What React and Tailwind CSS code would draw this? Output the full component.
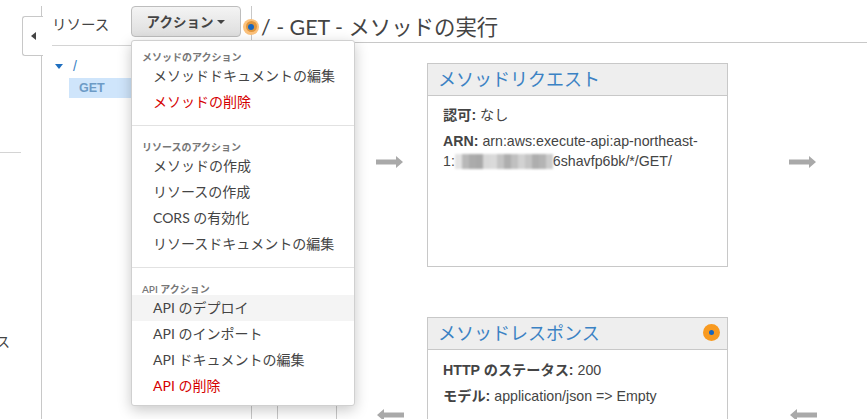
import React from "react";

const cjk = "font-['Liberation_Sans','Noto_Sans_CJK_JP',sans-serif]";
const lato = "font-['Lato','Noto_Sans_CJK_JP',sans-serif]";

const mosaic = ["#e4e4e4", "#b8b8b8", "#ababab", "#a8a8a8", "#d8d8d8", "#dadada", "#c4c4c4", "#aeaeae", "#c0c0c0", "#d2d2d2", "#c4c4c4", "#aeaeae", "#b4b4b4", "#cccccc"];

const menu = [
  {
    label: "メソッドのアクション",
    items: [{ text: "メソッドドキュメントの編集" }, { text: "メソッドの削除", red: true }],
  },
  {
    label: "リソースのアクション",
    items: [{ text: "メソッドの作成" }, { text: "リソースの作成" }, { text: "CORS の有効化" }, { text: "リソースドキュメントの編集" }],
  },
  {
    label: "API アクション",
    items: [{ text: "API のデプロイ", active: true }, { text: "API のインポート" }, { text: "API ドキュメントの編集" }, { text: "API の削除", red: true }],
  },
];

const Dot = () => (
  <span className="flex h-[17px] w-[17px] shrink-0 items-center justify-center rounded-full bg-[#f89a20]">
    <span className="h-[5px] w-[5px] rounded-full bg-[#1666c0]" />
  </span>
);

const HaloDot = () => (
  <span className="flex h-4 w-4 shrink-0 items-center justify-center rounded-full bg-[#fcc27c]">
    <span className="flex h-[11px] w-[11px] items-center justify-center rounded-full bg-[#e0963e]">
      <span className="h-[6px] w-[6px] rounded-full bg-[#1666c0]" />
    </span>
  </span>
);

const Arrow = ({ left }) => (
  <svg width="28" height="12" viewBox="0 0 28 12" className={left ? "rotate-180" : ""}>
    <path d="M0 3.500h20V0l7 6-7 6V8.500H0z" fill="#a9a9a9" />
  </svg>
);

const ActionMenu = () => (
  <div className={`absolute left-[131px] top-[40px] z-10 w-[224px] rounded-[3px] border border-[#d0d0d0] bg-white shadow-[0_4px_14px_rgba(0,0,0,0.22)] ${lato}`}>
    {menu.map((group, i) => (
      <div key={group.label} className={i > 0 ? "border-t border-[#e2e2e2] pt-[14px]" : "pt-[9px]"}>
        <div className="pl-[10px] text-[10px] leading-[14px] font-semibold text-[#777]">{group.label}</div>
        <div className={`-mt-[1px] ${i === 2 ? "pb-[6px]" : "pb-[10px]"}`}>
          {group.items.map((item) => (
            <div
              key={item.text}
              className={`h-[26px] pl-[21px] text-[14px] leading-[26px] ${item.red ? "text-[#d50000]" : "text-[#444]"} ${item.active ? "bg-[#f4f4f4]" : ""}`}
            >
              {item.text}
            </div>
          ))}
        </div>
      </div>
    ))}
  </div>
);

const Card = ({ title, dot, className, children }) => (
  <div className={`w-[301px] border border-[#c8c8c8] bg-white ${className}`}>
    <div className="flex h-[32px] items-start justify-between border-b border-[#c8c8c8] bg-[#eeeeee] pl-[10px] pr-[7px]">
      <span className="text-[18px] leading-[32px] text-[#3b82c4]">{title}</span>
      {dot && <span className="mt-[6px]"><Dot /></span>}
    </div>
    <div className="px-[15px] pt-[10px] text-[14.200px] leading-[20px] text-[#444]">{children}</div>
  </div>
);

export default function App() {
  return (
    <div className={`relative flex h-[419px] w-[867px] overflow-hidden bg-white pt-[6px] ${cjk}`}>
      <div className="relative w-[42px] shrink-0 border-r border-[#c8c8c8]">
        <div className="mt-[146px] w-[21px] border-t border-[#d4d4d4]" />
        <div className="mt-[179px] w-[10px] overflow-hidden text-[14px] leading-[20px] text-[#444]">
          <span className="-ml-[4px] block">ス</span>
        </div>
        <div className="absolute left-[22px] top-[10px] flex h-[40px] w-[21px] items-center justify-center rounded-l-[3px] border border-r-0 border-[#c8c8c8] bg-white">
          <span className="h-0 w-0 border-y-[4px] border-r-[5px] border-y-transparent border-r-[#444]" />
        </div>
      </div>

      <div className="w-[210px] shrink-0 border-r border-[#c8c8c8]">
        <div className="ml-[10px] flex h-[40px] items-center border-b border-[#d4d4d4]">
          <span className="text-[14.500px] text-[#444]">リソース</span>
        </div>
        <div className="ml-[13px] mt-[10px] flex items-center">
          <span className="h-0 w-0 border-x-[4px] border-t-[5px] border-x-transparent border-t-[#1f6fc0]" />
          <span className="ml-[10px] text-[14px] leading-[20px] text-[#3b82c4]">/</span>
        </div>
        <div className="ml-[27px] mt-[2px] flex h-[20px] items-center bg-[#cfe5fb] pl-[10px] text-[12.500px] font-bold text-[#6d9bc6]">GET</div>
      </div>

      <div className="min-w-0 flex-1">
        <div className="flex h-[37px] items-center border-b border-[#c8c8c8] pt-[5px]">
          <span className="-ml-[9px] mr-[2px]"><HaloDot /></span>
          <h1 className={`text-[21.400px] leading-[28px] text-[#444] ${lato}`}>/ - GET - メソッドの実行</h1>
        </div>
        <div className="flex h-[376px]">
          <div className="w-[26px] shrink-0 border-r border-[#c8c8c8]" />
          <div className="w-[59px] shrink-0 border-r border-[#c8c8c8]" />
          <div className="grid min-w-0 flex-1 grid-cols-[90px_301px_1fr] grid-rows-[204px_50px_1fr] pt-[20px]">
            <div className="flex items-start pl-[39px] pt-[93px]"><Arrow /></div>
            <Card title="メソッドリクエスト">
              <p className="-mt-[1px]"><b>認可:</b> なし</p>
              <p className="mt-[6px]"><b>ARN:</b> arn:aws:execute-api:ap-northeast-<br />
                1:<span className="inline-flex h-[15px] w-[98px] blur-[1px] align-[-3px]">
                  {mosaic.map((c, i) => <span key={i} className="h-full flex-1" style={{ backgroundColor: c }} />)}
                </span>6shavfp6bk/*/GET/
              </p>
            </Card>
            <div className="flex items-start pl-[61px] pt-[93px]"><Arrow /></div>
            <div className="col-span-3" />
            <div className="flex items-start pl-[39px] pt-[92px]"><Arrow left /></div>
            <Card title="メソッドレスポンス" dot className="h-[150px]">
              <p><b>HTTP のステータス:</b> 200</p>
              <p className="mt-[6px]"><b>モデル:</b> application/json =&gt; Empty</p>
            </Card>
            <div className="flex items-start pl-[61px] pt-[92px]"><Arrow left /></div>
          </div>
        </div>
      </div>

      <button className={`absolute left-[131px] top-[6px] z-10 flex h-[31px] w-[110px] items-center justify-center rounded-[4px] border border-[#bdbdbd] bg-gradient-to-b from-[#f4f4f4] to-[#dedede] pt-[1px] text-[13.500px] font-bold text-[#444] ${lato}`}>
        アクション
        <span className="ml-[4px] h-0 w-0 border-x-[4px] border-t-[4px] border-x-transparent border-t-[#444]" />
      </button>
      <ActionMenu />
    </div>
  );
}
